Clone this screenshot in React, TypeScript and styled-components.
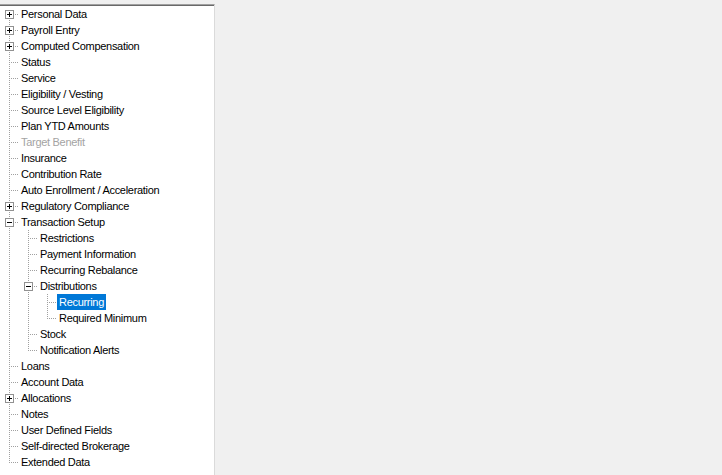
import React from "react";
import styled, { createGlobalStyle, css } from "styled-components";

const Global = createGlobalStyle`
  html, body { margin: 0; padding: 0; background: #f0f0f0; }
  body { font-family: "Liberation Sans", Arial, sans-serif; overflow: hidden; }
`;

type Node = {
  label: string;
  box?: "plus" | "minus";
  disabled?: boolean;
  selected?: boolean;
  children?: Node[];
};

const tree: Node[] = [
  { label: "Personal Data", box: "plus" },
  { label: "Payroll Entry", box: "plus" },
  { label: "Computed Compensation", box: "plus" },
  { label: "Status" },
  { label: "Service" },
  { label: "Eligibility / Vesting" },
  { label: "Source Level Eligibility" },
  { label: "Plan YTD Amounts" },
  { label: "Target Benefit", disabled: true },
  { label: "Insurance" },
  { label: "Contribution Rate" },
  { label: "Auto Enrollment / Acceleration" },
  { label: "Regulatory Compliance", box: "plus" },
  {
    label: "Transaction Setup",
    box: "minus",
    children: [
      { label: "Restrictions" },
      { label: "Payment Information" },
      { label: "Recurring Rebalance" },
      {
        label: "Distributions",
        box: "minus",
        children: [
          { label: "Recurring", selected: true },
          { label: "Required Minimum" },
        ],
      },
      { label: "Stock" },
      { label: "Notification Alerts" },
    ],
  },
  { label: "Loans" },
  { label: "Account Data" },
  { label: "Allocations", box: "plus" },
  { label: "Notes" },
  { label: "User Defined Fields" },
  { label: "Self-directed Brokerage" },
  { label: "Extended Data" },
];

type VLine = "none" | "full" | "top" | "bottom";

type Row = {
  node: Node;
  guides: boolean[];
  own: VLine;
};

function flatten(nodes: Node[], guides: boolean[], out: Row[], root: boolean) {
  nodes.forEach((n, i) => {
    const last = i === nodes.length - 1;
    const first = root && i === 0;
    const own: VLine = first ? "bottom" : last ? "top" : "full";
    out.push({ node: n, guides, own });
    if (n.children && n.box === "minus") {
      flatten(n.children, [...guides, !last], out, false);
    }
  });
  return out;
}

const rows = flatten(tree, [], [], true);

const Page = styled.div`
  display: flex;
  align-items: flex-start;
  height: 475px;
  padding-top: 4px;
  box-sizing: border-box;
`;

const TreePanel = styled.div`
  width: 215px;
  height: 471px;
  box-sizing: border-box;
  background: #ffffff;
  border-top: 1px solid #a0a0a0;
  box-shadow: inset 0 1px 0 #696969;
  border-right: 1px solid #dadada;
  padding-top: 1px;
  overflow: hidden;
`;

const TreeList = styled.ul`
  list-style: none;
  margin: 0;
  padding: 0;
`;

const TreeRow = styled.li`
  display: flex;
  align-items: stretch;
  height: 16px;
`;

const dotsV = css`
  background-image: repeating-linear-gradient(
    to bottom,
    #a0a0a0 0px,
    #a0a0a0 1px,
    transparent 1px,
    transparent 2px
  );
`;

const dotsH = css`
  background-image: repeating-linear-gradient(
    to right,
    #a0a0a0 0px,
    #a0a0a0 1px,
    transparent 1px,
    transparent 2px
  );
`;

const Guide = styled.span<{ $line: boolean }>`
  position: relative;
  flex: none;
  width: 19px;
  height: 16px;
  &::before {
    content: "";
    display: ${(p) => (p.$line ? "block" : "none")};
    position: absolute;
    left: 9px;
    top: 0;
    width: 1px;
    height: 16px;
    ${dotsV}
  }
`;

const Connector = styled.span<{ $v: VLine }>`
  position: relative;
  flex: none;
  width: 19px;
  height: 16px;
  &::before {
    content: "";
    position: absolute;
    left: 9px;
    width: 1px;
    ${dotsV}
    ${(p) =>
      p.$v === "full"
        ? css`top: 0; height: 16px;`
        : p.$v === "top"
        ? css`top: 0; height: 9px;`
        : css`top: 8px; height: 8px;`}
  }
  &::after {
    content: "";
    position: absolute;
    left: 11px;
    top: 8px;
    width: 7px;
    height: 1px;
    ${dotsH}
  }
`;

const Expander = styled.span<{ $kind: "plus" | "minus" }>`
  position: absolute;
  left: 5px;
  top: 4px;
  width: 9px;
  height: 9px;
  box-sizing: border-box;
  border: 1px solid #919191;
  background: #ffffff;
  z-index: 1;
  &::before {
    content: "";
    position: absolute;
    left: 1px;
    top: 3px;
    width: 5px;
    height: 1px;
    background: #000;
  }
  &::after {
    content: "";
    display: ${(p) => (p.$kind === "plus" ? "block" : "none")};
    position: absolute;
    left: 3px;
    top: 1px;
    width: 1px;
    height: 5px;
    background: #000;
  }
`;

const Label = styled.span<{ $disabled?: boolean; $selected?: boolean }>`
  display: block;
  height: 16px;
  line-height: 16px;
  padding: 0 2px;
  font-size: 11px;
  letter-spacing: -0.3px;
  white-space: nowrap;
  color: ${(p) => (p.$selected ? "#ffffff" : p.$disabled ? "#a3a3a3" : "#000000")};
  background: ${(p) => (p.$selected ? "#0078d7" : "transparent")};
`;

const Workspace = styled.div`
  flex: 1;
  height: 100%;
  background: #f0f0f0;
`;

export default function App() {
  return (
    <>
      <Global />
      <Page>
        <TreePanel>
          <TreeList>
            {rows.map((r, i) => (
              <TreeRow key={i}>
                {r.guides.map((g, j) => (
                  <Guide key={j} $line={g} />
                ))}
                <Connector $v={r.own}>
                  {r.node.box && <Expander $kind={r.node.box} />}
                </Connector>
                <Label $disabled={r.node.disabled} $selected={r.node.selected}>
                  {r.node.label}
                </Label>
              </TreeRow>
            ))}
          </TreeList>
        </TreePanel>
        <Workspace />
      </Page>
    </>
  );
}
